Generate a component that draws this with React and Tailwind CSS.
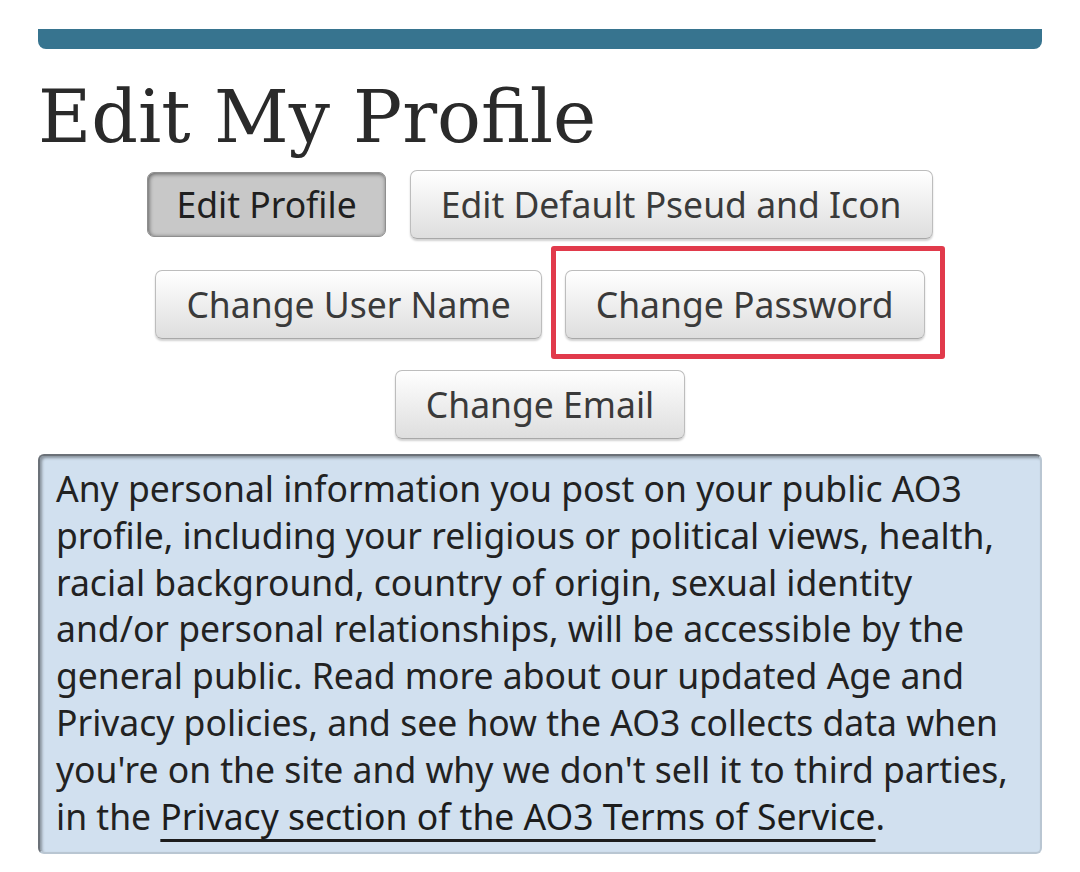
import React from 'react';

const btn =
  'h-[69px] px-[30px] rounded-[7px] border border-[#bdbdbd] border-b-[#a8a8a8] bg-gradient-to-b from-[#ffffff] to-[#dedede] text-[#3a3a3a] text-[35.5px] leading-none shadow-[0_2px_2px_rgba(0,0,0,0.18)] whitespace-nowrap';

const pressed =
  'h-[65px] px-[28px] rounded-[7px] border border-[#8f8f8f] bg-[#c8c8c8] text-[#1f1f1f] text-[35.5px] leading-none shadow-[inset_1px_1px_4px_rgba(0,0,0,0.55)] whitespace-nowrap';

export default function App() {
  return (
    <div className="w-[1080px] h-[872px] bg-white overflow-hidden font-['Noto_Sans',sans-serif]">
      <div className="px-[38px] pt-[29px]">
        {/* header strip */}
        <div className="h-[20px] bg-[#37748f] rounded-b-[8px]" />

        <h1 className="mt-[31px] text-[#2a2a2a] text-[73px] leading-[1] font-['DejaVu_Serif',serif]">
          Edit My Profile
        </h1>

        {/* sub navigation */}
        <div className="mt-[17px] flex flex-col items-center gap-[31px]">
          <div className="flex items-center gap-[24px]">
            <button className={pressed}>Edit Profile</button>
            <button className={btn}>Edit Default Pseud and Icon</button>
          </div>
          <div className="flex items-center gap-[23px]">
            <button className={btn}>Change User Name</button>
            <div className="relative">
              <button className={btn}>Change Password</button>
              <div className="absolute -left-[14px] -right-[20px] -top-[24px] -bottom-[20px] border-[5px] border-[#e13a4b] rounded-[3px] pointer-events-none" />
            </div>
          </div>
          <div className="flex items-center">
            <button className={btn}>Change Email</button>
          </div>
        </div>

        {/* notice */}
        <div className="mt-[15px] h-[400px] rounded-[6px] border-2 border-[#6b7178] border-r-[#b9c6d2] border-b-[#b9c6d2] bg-[#d1e0ef] shadow-[inset_2px_2px_3px_rgba(0,0,0,0.35)] pl-[16px] pr-[18px] pt-[9px]">
          <p className="text-[#222222] text-[35.5px] leading-[46.8px]">
            Any personal information you post on your public AO3 profile, including your religious or political views, health, racial background, country of origin, sexual identity and/or personal relationships, will be accessible by the general public. Read more about our updated Age and Privacy policies, and see how the AO3 collects data when you're on the site and why we don't sell it to third parties, in the{' '}
            <a className="underline decoration-[3px] underline-offset-[9px] text-[#1c1c1c]">
              Privacy section of the AO3 Terms of Service
            </a>
            .
          </p>
        </div>
      </div>
    </div>
  );
}
